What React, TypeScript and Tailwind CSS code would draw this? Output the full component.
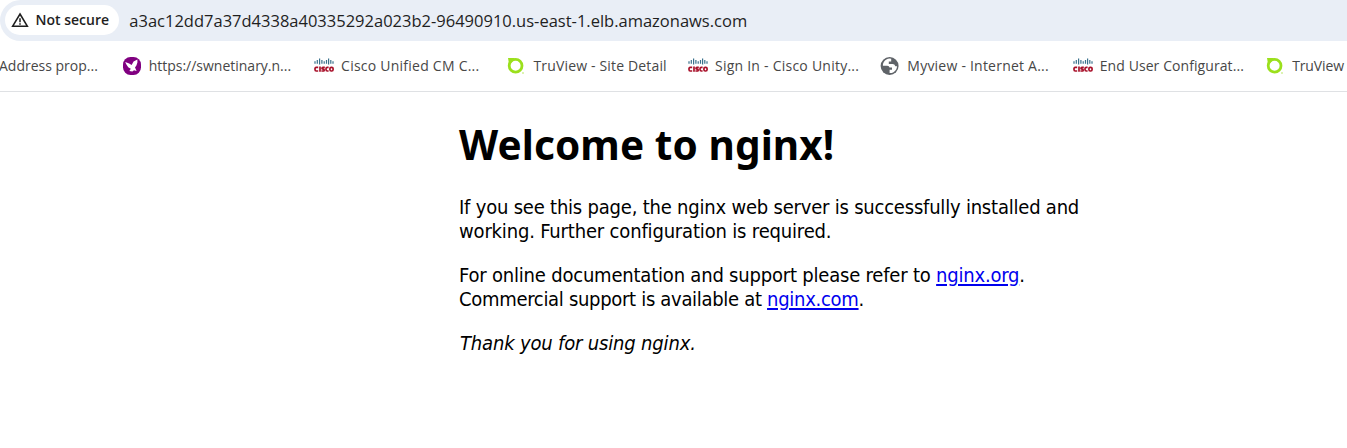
import type { ReactNode } from "react";

function WarningIcon() {
  return (
    <svg width="18" height="16" viewBox="0 0 18 16" fill="none" className="shrink-0">
      <path d="M9 2 L16.3 14.2 H1.7 Z" stroke="#1f1f1f" strokeWidth="1.6" />
      <path d="M9 6.2 V10.2 M9 11.2 V12.8" stroke="#1f1f1f" strokeWidth="1.5" />
    </svg>
  );
}

function BirdIcon() {
  return (
    <svg width="20" height="20" viewBox="0 0 20 20">
      <rect x="1" y="1" width="18" height="18" rx="7.5" fill="#800080" />
      <path
        d="M3.2 6 L7.2 7.4 L9.6 9 L11.6 5.6 L15.4 3.4 L15.4 6.4 L14.4 9.4 L13 11.4 L14.6 15 L12 14.2 L10.4 15.4 L7.4 15 L8.8 12.8 L6.2 11.2 L4.4 8.6 Z"
        fill="#fff"
      />
    </svg>
  );
}

function CiscoIcon() {
  return (
    <svg width="20" height="20" viewBox="0 0 20 20">
      <path
        d="M1 5.2V7.8M3.3 4V7.8M5.6 2.4V8.4M7.9 4V7.8M10.2 5.2V7.8M12.5 4V7.8M14.6 2.4V8.4M16.8 4V7.8M19 5.2V7.8"
        stroke="#39718c"
        strokeWidth="1.2"
      />
      <g fill="none" stroke="#a8102a" strokeWidth="1.7">
        <path d="M4.2 11.4H2.2Q1 11.4 1 12.8V13.4Q1 15 2.2 15H4.2" />
        <path d="M6 10.6V15.8" />
        <path d="M10.8 11.4H9Q8 11.4 8 12.3T9 13.2Q10.2 13.2 10.2 14.1T9.3 15H7.4" />
        <path d="M14.6 11.4H13.4Q12 11.4 12 12.8V13.4Q12 15 13.4 15H14.6" />
        <rect x="15.9" y="11.4" width="3.2" height="3.6" rx="1.4" />
      </g>
    </svg>
  );
}

function TruViewIcon() {
  return (
    <svg width="20" height="20" viewBox="0 0 20 20">
      <path d="M2 2H9L4 8L2.8 6.4Z" fill="#9be01c" />
      <circle cx="9.6" cy="9.7" r="6.4" fill="none" stroke="#9be01c" strokeWidth="2.8" />
      <circle cx="17" cy="17" r="0.9" fill="#cdef8e" />
    </svg>
  );
}

function GlobeIcon() {
  return (
    <svg width="20" height="20" viewBox="0 0 20 20">
      <circle cx="9.6" cy="10" r="9" fill="#5f6368" />
      <path
        d="M11.2 2.7Q6.4 1.9 3.8 6.1Q2.6 8.2 2.9 9.8H7.2Q9.4 9.9 9.5 11.6H12V13.8H9.6V17Q13.8 17.2 16.2 13.4Q17 11.8 17.1 10.2H15.4Q14.7 8 12.5 8H8.8V5.6H11.2Z"
        fill="#fff"
      />
    </svg>
  );
}

type Bookmark = { icon: ReactNode; label: string; box: string; tracking: string };

const bookmarks: Bookmark[] = [
  { icon: <BirdIcon />, label: "https://swnetinary.n...", box: "w-[192.4px]", tracking: "tracking-[-0.01px]" },
  { icon: <CiscoIcon />, label: "Cisco Unified CM C...", box: "w-[192.4px]", tracking: "tracking-[0.24px]" },
  { icon: <TruViewIcon />, label: "TruView - Site Detail", box: "w-[181.5px]", tracking: "tracking-[0.16px]" },
  { icon: <CiscoIcon />, label: "Sign In - Cisco Unity...", box: "w-[192.4px]", tracking: "tracking-[0.24px]" },
  { icon: <GlobeIcon />, label: "Myview - Internet A...", box: "w-[192.4px]", tracking: "tracking-[0.22px]" },
  { icon: <CiscoIcon />, label: "End User Configurat...", box: "w-[192.4px]", tracking: "tracking-[0.08px]" },
  { icon: <TruViewIcon />, label: "TruView", box: "w-[81px]", tracking: "tracking-[-0.1px]" },
];

export default function App() {
  return (
    <div className="h-[448px] w-full overflow-hidden bg-white">
      <header className="font-['Open_Sans',sans-serif]">
        <div className="flex h-[41px] items-center rounded-l-[21px] bg-[#e9eef6] pl-[5px] text-[#1f1f1f]">
          <div className="-mt-px flex h-[30px] w-[114px] shrink-0 items-center rounded-full bg-white pl-[6px]">
            <WarningIcon />
            <span className="ml-[6.5px] text-[14px] leading-[20px] font-semibold whitespace-nowrap">Not secure</span>
          </div>
          <span className="ml-[10.3px] text-[16.5px] leading-[22px] whitespace-nowrap">
            a3ac12dd7a37d4338a40335292a023b2-96490910.us-east-1.elb.amazonaws.com
          </span>
        </div>
        <nav className="flex h-[51px] items-center overflow-hidden border-b border-[#dfe1e4] text-[14px] leading-[20px] whitespace-nowrap text-[#474747]">
          <span className="-ml-px w-[122.7px] shrink-0">Address prop...</span>
          {bookmarks.map((b, i) => (
            <div key={i} className={`flex shrink-0 items-center gap-[7px] ${b.box}`}>
              {b.icon}
              <span className={b.tracking}>{b.label}</span>
            </div>
          ))}
        </nav>
      </header>
      <main className="ml-[459px] w-[660px] pt-[29px] font-['DejaVu_Sans_Condensed','DejaVu_Sans',sans-serif] text-[20px] leading-[24px] whitespace-nowrap text-black">
        <h1 className="font-['Noto_Sans',sans-serif] text-[40.5px] leading-[48px] font-bold tracking-[0.1px]">
          Welcome to nginx!
        </h1>
        <p className="mt-[26px]">
          <span className="tracking-[-0.21px]">If you see this page, the nginx web server is successfully installed and</span>
          <br />
          <span className="tracking-[-0.17px]">working. Further configuration is required.</span>
        </p>
        <p className="mt-[20px]">
          <span className="tracking-[-0.2px]">For online documentation and support please refer to </span>
          <a className="tracking-[-0.22px] text-[#0000ee] underline decoration-2 underline-offset-2">nginx.org</a>.
          <br />
          <span className="tracking-[-0.31px]">Commercial support is available at </span>
          <a className="tracking-[-0.28px] text-[#0000ee] underline decoration-2 underline-offset-2">nginx.com</a>.
        </p>
        <p className="mt-[20px] ml-px tracking-[-0.17px] italic">Thank you for using nginx.</p>
      </main>
    </div>
  );
}
